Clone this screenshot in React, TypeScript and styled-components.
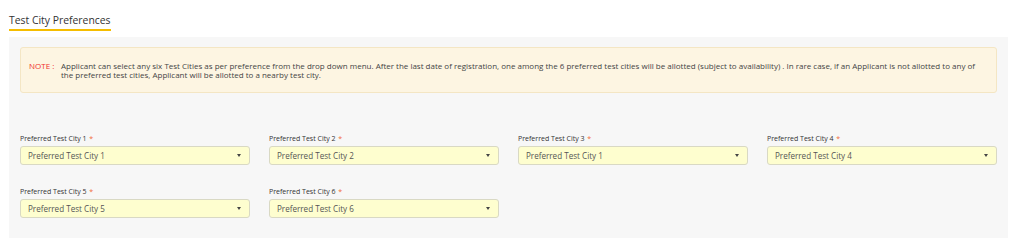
import React from "react";
import styled, { createGlobalStyle } from "styled-components";

const Global = createGlobalStyle`
  html, body { margin: 0; padding: 0; background: #ffffff; }
  body { font-family: "Open Sans", "Noto Sans", Arial, sans-serif; color: #333; }
`;

const Page = styled.div`
  display: flex;
  flex-direction: column;
  align-items: flex-start;
  padding: 12px 7px 0 9px;
`;

const Title = styled.h3`
  margin: 0;
  font-size: 10.4px;
  line-height: 17px;
  font-weight: 400;
  color: #333;
  border-bottom: 2px solid #f5bd00;
`;

const Panel = styled.div`
  align-self: stretch;
  margin-top: 6px;
  background: #f7f7f7;
  padding: 10px 11px 20px 11px;
  min-height: 170px;
`;

const Note = styled.div`
  display: flex;
  align-items: flex-start;
  height: 46px;
  box-sizing: border-box;
  padding: 14px 10px 0 8px;
  border: 1px solid #f4e6c4;
  border-radius: 3px;
  background: #fdf5e2;
  font-size: 8px;
  line-height: 8.6px;
  color: #444;
`;

const NoteLabel = styled.span`
  flex: 0 0 32px;
  color: #f0302a;
  font-weight: 400;
`;

const NoteText = styled.p`
  margin: 0;
  flex: 1;
`;

const Grid = styled.div`
  display: grid;
  grid-template-columns: repeat(4, 230px);
  column-gap: 19px;
  row-gap: 22px;
  margin-top: 41px;
`;

const Field = styled.div`
  display: flex;
  flex-direction: column;
`;

const Label = styled.label`
  font-size: 7px;
  line-height: 9px;
  color: #333;
  margin-bottom: 3px;
`;

const Star = styled.span`
  color: #f26b3a;
  margin-left: 1px;
`;

const Select = styled.div`
  display: flex;
  align-items: center;
  justify-content: space-between;
  height: 19px;
  box-sizing: border-box;
  padding: 0 8px 0 7px;
  background: #fefecf;
  border: 1px solid #d9d9c4;
  border-radius: 3px;
  font-size: 8.1px;
  color: #555;
`;

const Caret = styled.span`
  width: 0;
  height: 0;
  border-left: 2.5px solid transparent;
  border-right: 2.5px solid transparent;
  border-top: 3px solid #444;
`;

const fields = [
  { label: "Preferred Test City 1", value: "Preferred Test City 1" },
  { label: "Preferred Test City 2", value: "Preferred Test City 2" },
  { label: "Preferred Test City 3", value: "Preferred Test City 1" },
  { label: "Preferred Test City 4", value: "Preferred Test City 4" },
  { label: "Preferred Test City 5", value: "Preferred Test City 5" },
  { label: "Preferred Test City 6", value: "Preferred Test City 6" },
];

export default function App() {
  return (
    <>
      <Global />
      <Page>
        <Title>Test City Preferences</Title>
        <Panel>
          <Note>
            <NoteLabel>NOTE :</NoteLabel>
            <NoteText>
              Applicant can select any six Test Cities as per preference from the drop down menu. After the last date of
              registration, one among the 6 preferred test cities will be allotted (subject to availability) . In rare case, if an
              Applicant is not allotted to any of the preferred test cities, Applicant will be allotted to a nearby test city.
            </NoteText>
          </Note>
          <Grid>
            {fields.map((f) => (
              <Field key={f.label}>
                <Label>
                  {f.label}
                  <Star> *</Star>
                </Label>
                <Select>
                  <span>{f.value}</span>
                  <Caret />
                </Select>
              </Field>
            ))}
          </Grid>
        </Panel>
      </Page>
    </>
  );
}
